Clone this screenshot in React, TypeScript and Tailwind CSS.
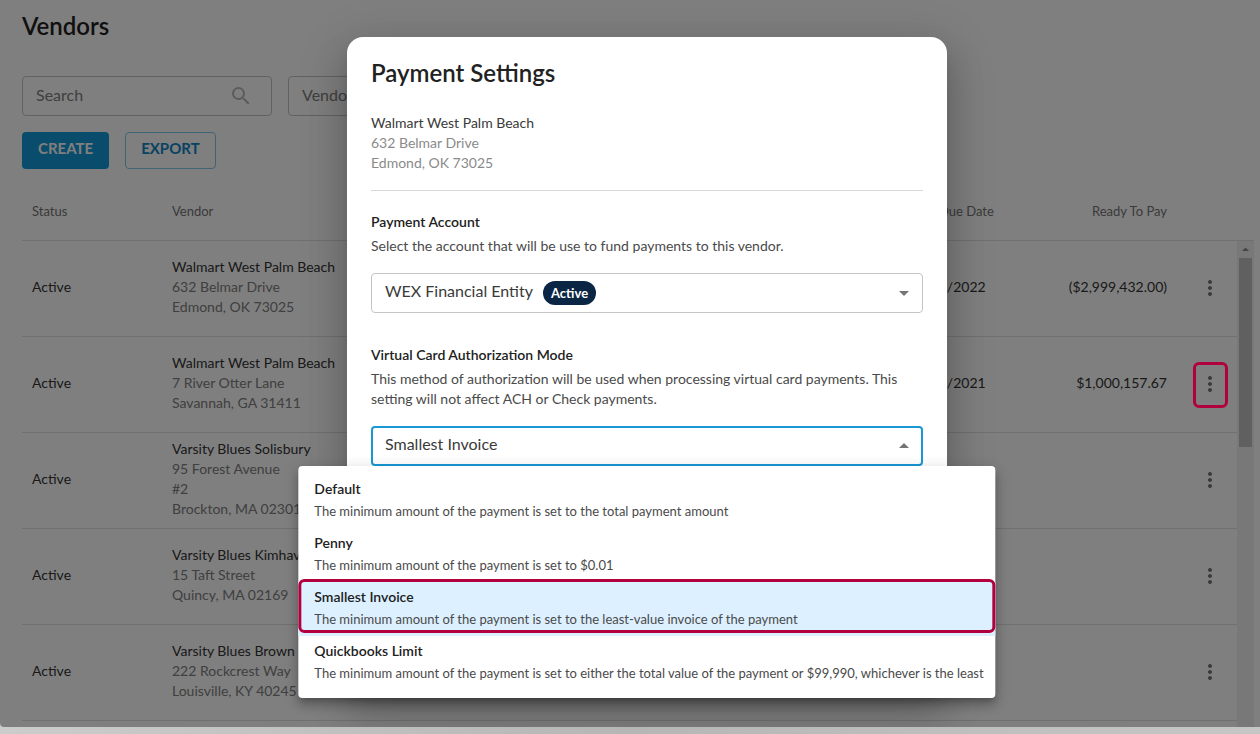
import { MdArrowDropDown, MdArrowDropUp, MdMoreVert, MdSearch } from "react-icons/md";

const vendors = [
    { name: "Walmart West Palm Beach", address: ["632 Belmar Drive", "Edmond, OK 73025"], due: "10/14/2022", ready: "($2,999,432.00)" },
    { name: "Walmart West Palm Beach", address: ["7 River Otter Lane", "Savannah, GA 31411"], due: "12/10/2021", ready: "$1,000,157.67", highlighted: true },
    { name: "Varsity Blues Solisbury", address: ["95 Forest Avenue", "#2", "Brockton, MA 02301"] },
    { name: "Varsity Blues Kimhaven", address: ["15 Taft Street", "Quincy, MA 02169"] },
    { name: "Varsity Blues Brown", address: ["222 Rockcrest Way", "Louisville, KY 40245"] },
];

const modes = [
    { name: "Default", text: "The minimum amount of the payment is set to the total payment amount" },
    { name: "Penny", text: "The minimum amount of the payment is set to $0.01" },
    { name: "Smallest Invoice", text: "The minimum amount of the payment is set to the least-value invoice of the payment" },
    {
        name: "Quickbooks Limit",
        text: "The minimum amount of the payment is set to either the total value of the payment or $99,990, whichever is the least",
    },
];

function VendorTable() {
    return (
        <div className="mt-[15px] flex pb-1.5">
            <table className="flex-1 table-fixed border-collapse text-left">
                <colgroup>
                    <col className="w-[140px]" />
                    <col />
                    <col className="w-[154px]" />
                    <col className="w-[125px]" />
                    <col className="w-[60px]" />
                </colgroup>
                <thead>
                    <tr className="h-14 border-b border-[#e0e0e0] text-[13px] text-[#757575]">
                        <th className="px-2.5 font-normal">Status</th>
                        <th className="px-2.5 font-normal">Vendor</th>
                        <th className="px-2.5 font-normal">Next Due Date</th>
                        <th className="px-2.5 text-right font-normal">Ready To Pay</th>
                        <th aria-label="Actions" />
                    </tr>
                </thead>
                <tbody>
                    {vendors.map((vendor, i) => (
                        <tr key={i} className="h-24 border-b border-[#e0e0e0] text-sm/5 text-[#333333]">
                            <td className="px-2.5 pb-0.5">Active</td>
                            <td className="px-2.5 pb-0.5">
                                {vendor.name}
                                {vendor.address.map((line) => (
                                    <div key={line} className="text-[#808080]">
                                        {line}
                                    </div>
                                ))}
                            </td>
                            <td className="px-2.5 pb-0.5">{vendor.due}</td>
                            <td className="px-2.5 pb-0.5 text-right">{vendor.ready}</td>
                            <td className="pl-1.5">
                                <div className="relative flex items-center justify-center">
                                    <button aria-label="Vendor actions" className="text-[#757575]">
                                        <MdMoreVert className="size-6" />
                                    </button>
                                    {vendor.highlighted && (
                                        <span className="absolute -top-2.5 -bottom-3 left-2.5 z-20 w-[35px] rounded-md border-3 border-[#b2003f]" />
                                    )}
                                </div>
                            </td>
                        </tr>
                    ))}
                </tbody>
            </table>

            {/* Scrollbar */}
            <div className="flex w-[17px] flex-col">
                <div className="h-[57px] border-b border-[#e0e0e0]" />
                <div className="-mb-1.5 flex flex-1 flex-col items-center bg-[#f1f1f1]">
                    <MdArrowDropUp className="size-[17px] text-[#8a8a8a]" />
                    <div className="h-[189px] w-[13px] bg-[#c1c1c1]" />
                </div>
            </div>
        </div>
    );
}

function ModeMenu() {
    return (
        <ul
            role="listbox"
            aria-label="Virtual Card Authorization Mode"
            className="absolute top-full left-1/2 z-10 w-max -translate-x-1/2 rounded-sm bg-white py-2 shadow-[0_5px_5px_-3px_rgba(0,0,0,0.2),0_8px_10px_1px_rgba(0,0,0,0.14),0_3px_14px_2px_rgba(0,0,0,0.12)]"
        >
            {modes.map(({ name, text }) => {
                const selected = name === "Smallest Invoice";
                return (
                    <li
                        key={name}
                        role="option"
                        aria-selected={selected}
                        className={selected ? "relative h-[54px] bg-[#dcf0ff] pt-[5px] pr-3 pl-4" : "h-[54px] pt-[5px] pr-3 pl-4"}
                    >
                        <div className="text-sm/5 font-semibold text-[#212121]">{name}</div>
                        <div className="mt-0.5 text-[13px]/5 text-[#4a4a4a]">{text}</div>
                        {selected && (
                            <span className="absolute inset-x-0 -top-[3px] h-[54px] rounded-md border-3 border-[#b2003f]" />
                        )}
                    </li>
                );
            })}
        </ul>
    );
}

function PaymentSettings() {
    return (
        <div
            role="dialog"
            aria-labelledby="dialog-title"
            className="w-[600px] self-start rounded-2xl bg-white px-6 pt-5 pb-56 text-sm/5 text-[#4a4a4a] shadow-[0_11px_15px_-7px_rgba(0,0,0,0.2),0_24px_38px_3px_rgba(0,0,0,0.14),0_9px_46px_8px_rgba(0,0,0,0.12)]"
        >
            <h2 id="dialog-title" className="text-2xl/8 font-semibold text-[#212121]">
                Payment Settings
            </h2>

            <address className="mt-6 border-b border-[#d9d9d9] pb-[17px] text-[#8a8a8a] not-italic">
                <div className="text-[#3a3a3a]">Walmart West Palm Beach</div>
                <div>632 Belmar Drive</div>
                <div>Edmond, OK 73025</div>
            </address>

            <label htmlFor="account" className="mt-[21px] block font-semibold text-[#212121]">
                Payment Account
            </label>
            <p className="mt-1">Select the account that will be use to fund payments to this vendor.</p>
            <div className="relative mt-[17px]">
                <select
                    id="account"
                    className="block h-10 w-full appearance-none rounded-sm border border-[#c4c4c4] px-[13px] pb-1 text-base text-[#3a3a3a]"
                >
                    <option>WEX Financial Entity</option>
                </select>
                <span className="absolute top-2 left-[172px] rounded-full bg-[#0b2545] px-2 py-0.5 text-[13px]/5 font-bold text-white">
                    Active
                </span>
                <MdArrowDropDown className="pointer-events-none absolute top-2 right-[7px] size-6 text-[#757575]" />
            </div>

            <label htmlFor="mode" className="mt-8 block font-semibold text-[#212121]">
                Virtual Card Authorization Mode
            </label>
            <p className="mt-1">
                This method of authorization will be used when processing virtual card payments. This setting will not affect
                ACH or Check payments.
            </p>
            <div className="relative mt-[17px]">
                <select
                    id="mode"
                    defaultValue="Smallest Invoice"
                    className="block h-10 w-full appearance-none rounded-sm border-2 border-[#1998d5] px-3 pb-1 text-base text-[#3a3a3a]"
                >
                    {modes.map(({ name }) => (
                        <option key={name}>{name}</option>
                    ))}
                </select>
                <MdArrowDropUp className="pointer-events-none absolute top-2 right-[7px] size-6 text-[#757575]" />
                <ModeMenu />
            </div>
        </div>
    );
}

export default function App() {
    return (
        <div className="min-h-screen overflow-hidden bg-linear-to-r from-[#cccccc] via-[#b6b6b6] to-[#c6c6c6] font-['Lato',sans-serif]">
            <div className="relative overflow-hidden rounded-bl-sm bg-white">
                <main className="pt-2.5 pr-1.5 pl-[22px]">
                    <h1 className="text-2xl/8 font-semibold text-[#212121]">Vendors</h1>

                    <div className="mt-[34px] flex gap-4">
                        <div className="flex h-10 w-[250px] items-center rounded-sm border border-[#c4c4c4] pr-[18px] pl-[13px]">
                            <input
                                aria-label="Search"
                                placeholder="Search"
                                className="min-w-0 flex-1 pb-0.5 text-base placeholder:text-[#808080]"
                            />
                            <MdSearch className="size-6 text-[#b8b8b8]" />
                        </div>
                        <input
                            aria-label="Vendor"
                            placeholder="Vendor"
                            className="h-10 w-[250px] rounded-sm border border-[#c4c4c4] px-[13px] pb-1 text-base placeholder:text-[#808080]"
                        />
                    </div>

                    <div className="mt-4 flex gap-4 text-[15px] font-bold">
                        <button className="h-[37px] rounded-sm bg-[#1499d6] px-4 pb-1 text-white">CREATE</button>
                        <button className="h-[37px] rounded-sm border border-[#82c8ea] px-[15px] pb-1 text-[#1287c4]">
                            EXPORT
                        </button>
                    </div>

                    <VendorTable />
                </main>

                <div className="absolute inset-0 z-10 flex justify-center bg-black/50 pt-[37px] pl-[34px]">
                    <PaymentSettings />
                </div>
            </div>
        </div>
    );
}
